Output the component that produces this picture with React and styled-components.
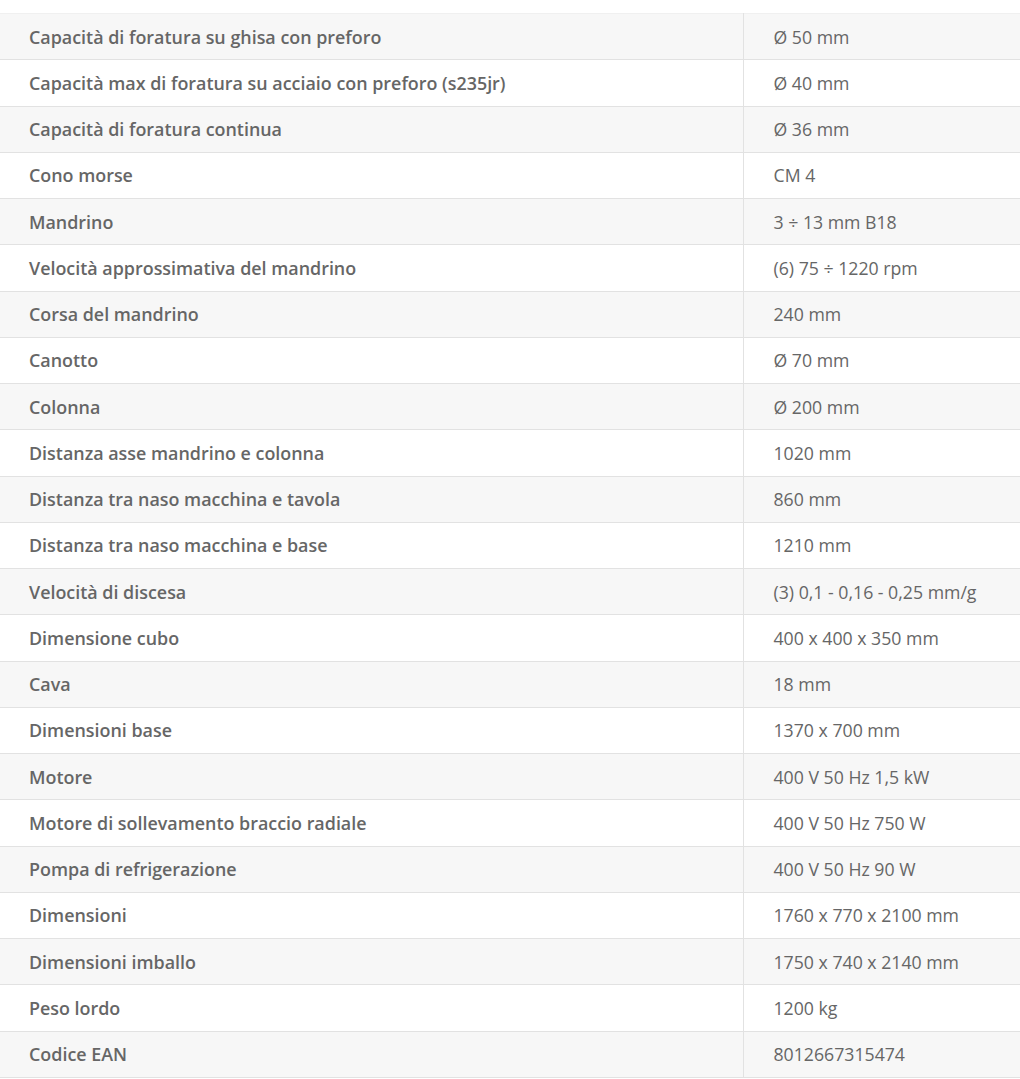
import React from 'react'
import styled, { createGlobalStyle } from 'styled-components'

const GlobalStyle = createGlobalStyle`
    html, body {
        margin: 0;
        padding: 0;
        background: #ffffff;
    }
`

const rows = [
    ['Capacità di foratura su ghisa con preforo', 'Ø 50 mm'],
    ['Capacità max di foratura su acciaio con preforo (s235jr)', 'Ø 40 mm'],
    ['Capacità di foratura continua', 'Ø 36 mm'],
    ['Cono morse', 'CM 4'],
    ['Mandrino', '3 ÷ 13 mm B18'],
    ['Velocità approssimativa del mandrino', '(6) 75 ÷ 1220 rpm'],
    ['Corsa del mandrino', '240 mm'],
    ['Canotto', 'Ø 70 mm'],
    ['Colonna', 'Ø 200 mm'],
    ['Distanza asse mandrino e colonna', '1020 mm'],
    ['Distanza tra naso macchina e tavola', '860 mm'],
    ['Distanza tra naso macchina e base', '1210 mm'],
    ['Velocità di discesa', '(3) 0,1 - 0,16 - 0,25 mm/g'],
    ['Dimensione cubo', '400 x 400 x 350 mm'],
    ['Cava', '18 mm'],
    ['Dimensioni base', '1370 x 700 mm'],
    ['Motore', '400 V 50 Hz 1,5 kW'],
    ['Motore di sollevamento braccio radiale', '400 V 50 Hz 750 W'],
    ['Pompa di refrigerazione', '400 V 50 Hz 90 W'],
    ['Dimensioni', '1760 x 770 x 2100 mm'],
    ['Dimensioni imballo', '1750 x 740 x 2140 mm'],
    ['Peso lordo', '1200 kg'],
    ['Codice EAN', '8012667315474'],
]

function App() {
    return (
        <React.Fragment>
            <GlobalStyle />
            <Wrapper>
                <SpecTable>
                    <tbody>
                        {rows.map(([label, value], i) => (
                            <Row key={label} striped={i % 2 === 0}>
                                <Label>{label}</Label>
                                <Value>{value}</Value>
                            </Row>
                        ))}
                    </tbody>
                </SpecTable>
            </Wrapper>
        </React.Fragment>
    )
}

const Wrapper = styled.div`
    padding-top: 13px;
    width: 1020px;
`

const SpecTable = styled.table`
    width: 100%;
    border-collapse: collapse;
    table-layout: fixed;
    font-family: "Open Sans", "Liberation Sans", sans-serif;
    color: #666666;
    border-top: 1px solid #f0f0f0;
`

const Row = styled.tr.withConfig({ shouldForwardProp: p => p !== 'striped' })`
    background: ${p => (p.striped ? '#f7f7f7' : '#ffffff')};
    border-bottom: 1px solid #e2e2e2;
`

const Cell = styled.td`
    box-sizing: border-box;
    height: 46.26px;
    padding: 0 0 0 29px;
    vertical-align: middle;
    font-size: 17.7px;
    line-height: 22px;
`

const Label = styled(Cell)`
    width: 743px;
    font-size: 17.9px;
    font-weight: 600;
`

const Value = styled(Cell)`
    font-weight: 400;
    padding-left: 30px;
    border-left: 1px solid #e2e2e2;
`

export default App
